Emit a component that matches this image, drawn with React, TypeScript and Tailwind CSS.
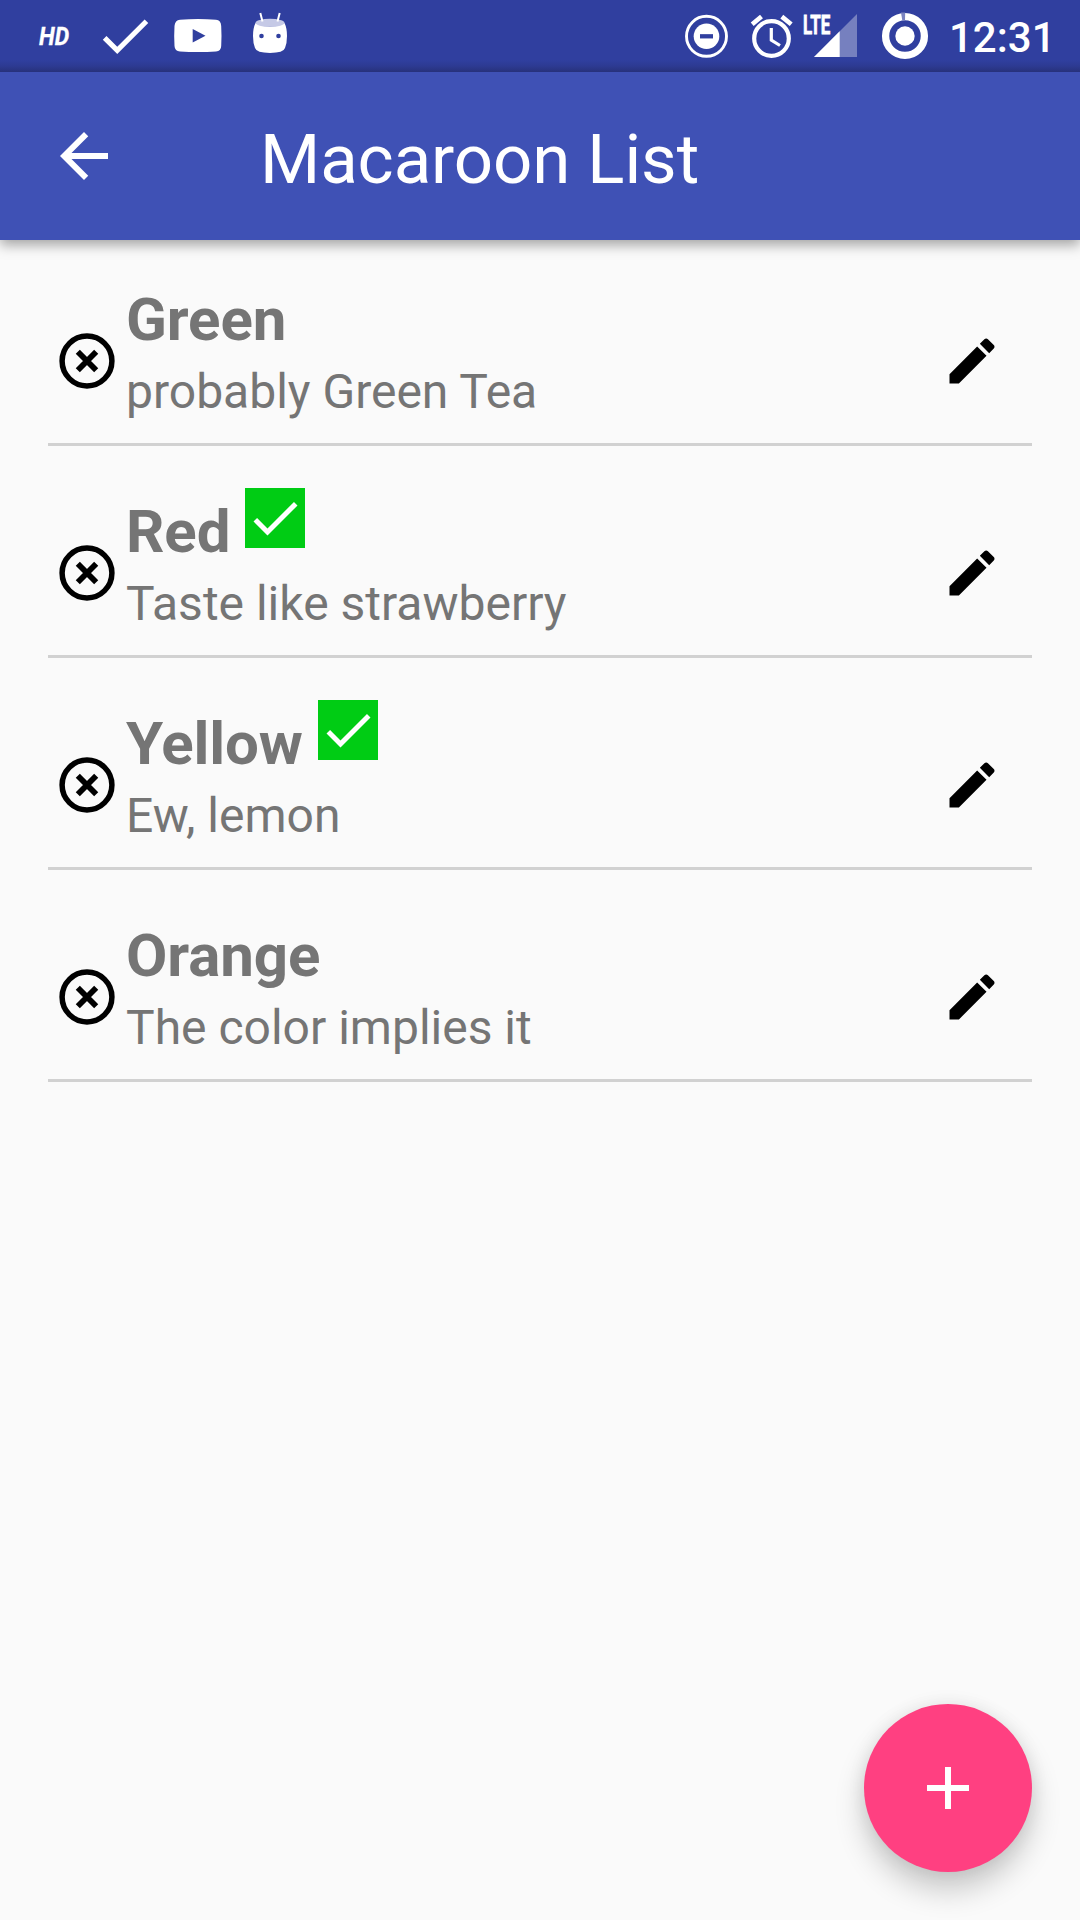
import React from "react";

type Macaroon = { name: string; note: string; done?: boolean };

const macaroons: Macaroon[] = [
  { name: "Green", note: "probably Green Tea" },
  { name: "Red", note: "Taste like strawberry", done: true },
  { name: "Yellow", note: "Ew, lemon", done: true },
  { name: "Orange", note: "The color implies it" },
];

const CHECK = "M9 16.17L4.83 12l-1.42 1.41L9 19 21 7l-1.41-1.41z";

function StatusBar() {
  return (
    <div className="flex h-[72px] items-center bg-[linear-gradient(to_bottom,#303f9f_60px,#2d3a92_66px,#27317b_72px)] pl-[38px] text-white">
      <div className="h-[30px] w-[56px] shrink-0 origin-left translate-x-px scale-x-[0.88] text-[26px] font-bold italic leading-[30px] [-webkit-text-stroke:0.3px_white]">HD</div>
      <svg className="h-[62px] w-[62px] shrink-0" viewBox="0 0 24 24" fill="currentColor">
        <path d={CHECK} />
      </svg>
      <svg className="ml-[14px] h-[72px] w-[56px] shrink-0" viewBox="170 0 56 72">
        <path d="M180 19.8Q198 18.2 216 19.8Q221 20.2 221.2 26Q221.8 36 221.2 46Q221 51.2 216 51.6Q198 52.6 180 51.6Q174.800 51.200 174.500 46Q173.900 36 174.500 26Q175 20.200 180 19.800Z" fill="currentColor" />
        <path d="M192.700 29L205.500 35.700L192.700 42.500Z" fill="#303f9f" />
      </svg>
      <svg className="ml-[22px] h-[72px] w-[44px] shrink-0" viewBox="248 0 44 72">
        <path d="M255.500 23Q270 30 284.500 23Q287 28 287 36Q287 43 285 48Q283.500 52.900 270 52.900Q256.500 52.900 255 48Q253 43 253 36Q253 28 255.500 23Z" fill="currentColor" />
        <ellipse cx="270" cy="22.800" rx="14.500" ry="4" fill="#c5c9e6" />
        <path d="M260.300 13L262.500 21.500M279.700 13L277.500 21.500" stroke="currentColor" strokeWidth="2" />
        <circle cx="261.500" cy="36" r="2.300" fill="#303f9f" />
        <circle cx="278.500" cy="36" r="2.300" fill="#303f9f" />
      </svg>
      <svg className="ml-[388px] h-[72px] w-[50px] shrink-0" viewBox="680 0 50 72">
        <circle cx="706.500" cy="36.300" r="20" fill="none" stroke="currentColor" strokeWidth="2.900" />
        <circle cx="706.500" cy="36.300" r="12.800" fill="currentColor" />
        <path d="M700 36.300H713" stroke="#303f9f" strokeWidth="4.300" />
      </svg>
      <svg className="ml-[16px] h-[72px] w-[50px] shrink-0" viewBox="746 0 50 72" fill="none" stroke="currentColor">
        <circle cx="771.500" cy="38.500" r="17.300" strokeWidth="4.200" />
        <path d="M771.300 28V40.200L780 45.500" strokeWidth="3.200" />
        <path d="M752.200 24.300L761.500 16.600M781.800 16.600L791.200 24.300" strokeWidth="4.600" />
      </svg>
      <div className="relative ml-[8px] h-[72px] w-[54px] shrink-0">
        <svg className="h-[72px] w-[54px]" viewBox="804 0 54 72" fill="currentColor">
          <path d="M814 57H857V14Z" opacity=".34" />
          <path d="M814 57H839.700V31.300Z" />
        </svg>
        <span className="absolute -left-px top-[10px] origin-left scale-x-[0.65] text-[26px] font-bold leading-[30px] [-webkit-text-stroke:0.8px_white]">LTE</span>
      </div>
      <svg className="ml-[22px] h-[72px] w-[50px] shrink-0" viewBox="880 0 50 72">
        <circle cx="905" cy="36" r="19.400" fill="none" stroke="currentColor" strokeWidth="7.300" />
        <path d="M901 12.500L905.200 12.500L905 20.500L902.300 20.500Z" fill="#7a83c0" />
        <circle cx="905" cy="36" r="9.700" fill="currentColor" />
      </svg>
      <div className="ml-[19px] mt-[4px] whitespace-nowrap text-[42px] font-medium leading-[50px]">12:31</div>
    </div>
  );
}

function AppBar() {
  return (
    <header className="relative flex h-[168px] items-center bg-[#3f51b5] pl-12 text-white shadow-[0_5px_12px_rgba(0,0,0,0.35)] [clip-path:inset(0_0_-30px_0)]">
      <svg className="h-[72px] w-[72px]" viewBox="0 0 24 24" fill="currentColor">
        <path d="M20 11H7.83l5.59-5.59L12 4l-8 8 8 8 1.41-1.41L7.83 13H20z" />
      </svg>
      <h1 className="ml-[140px] mt-[8px] text-[69px] font-normal leading-[82px] tracking-[-0.08px]">Macaroon List</h1>
    </header>
  );
}

function Row({ item }: { item: Macaroon }) {
  return (
    <li className="flex h-[212px] items-center border-b-[3px] border-[#d1d1d1] pl-[9px] pr-[30px] pt-[45px]">
      <svg className="mb-[1px] h-[60px] w-[60px]" viewBox="0 0 60 60" fill="none" stroke="#000">
        <circle cx="30" cy="30" r="24.900" strokeWidth="5.500" />
        <path d="M20.800 20.800L39.200 39.200M39.200 20.800L20.800 39.200" strokeWidth="5.800" />
      </svg>
      <div className="ml-[9px] h-[152px] flex-1 text-[#757575]">
        <div className="flex h-[70px] items-start gap-[15px]">
          <h2 className="text-[60px] font-bold leading-[70px] tracking-[-0.1px]">{item.name}</h2>
          {item.done && (
            <svg className="-mt-[9px] h-[60px] w-[60px] bg-[#00cc14]" viewBox="0 0 24 24" fill="#fff">
              <path d={CHECK} />
            </svg>
          )}
        </div>
        <p className="mt-[9px] text-[48px] leading-[56px]">{item.note}</p>
      </div>
      <svg className="mb-[1px] h-[60px] w-[60px]" viewBox="0 0 24 24">
        <path d="M3 17.25V21h3.75L17.81 9.94l-3.75-3.75L3 17.25zM20.71 7.04c.39-.39.39-1.020 0-1.410l-2.340-2.340c-.39-.39-1.020-.39-1.410 0l-1.830 1.830 3.750 3.750 1.830-1.830z" />
      </svg>
    </li>
  );
}

export default function App() {
  return (
    <div className="relative h-[1920px] w-[1080px] overflow-hidden bg-[#fafafa] font-['Roboto',sans-serif]">
      <StatusBar />
      <AppBar />
      <ul className="-mt-[6px] px-12">
        {macaroons.map((m) => (
          <Row key={m.name} item={m} />
        ))}
      </ul>
      <button
        aria-label="Add macaroon"
        className="absolute bottom-12 right-12 flex h-[168px] w-[168px] items-center justify-center rounded-full bg-[#ff4081] shadow-[0_18px_30px_rgba(0,0,0,0.2),0_0_18px_rgba(0,0,0,0.08)]"
      >
        <svg className="h-[72px] w-[72px]" viewBox="0 0 24 24" fill="#fff">
          <path d="M19 13h-6v6h-2v-6H5v-2h6V5h2v6h6z" />
        </svg>
      </button>
    </div>
  );
}
